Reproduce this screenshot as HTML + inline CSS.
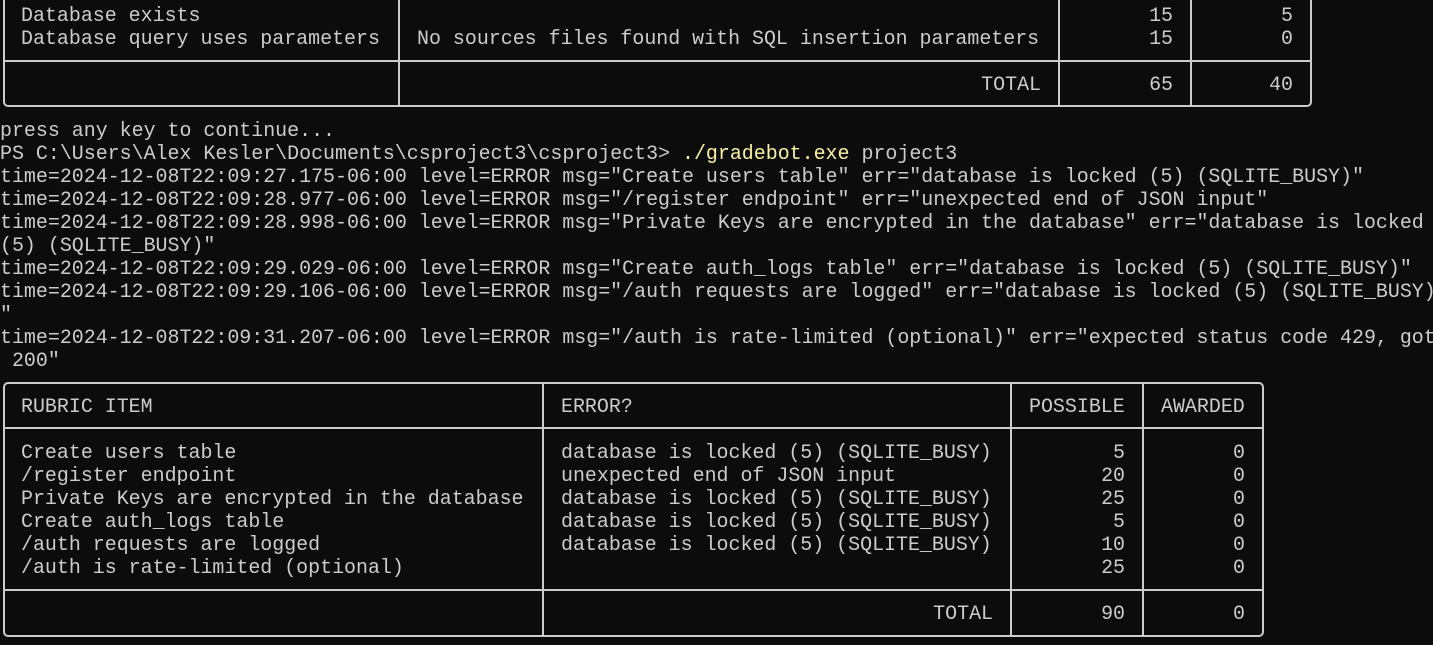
<!DOCTYPE html>
<html><head><meta charset="utf-8"><style>
html,body{margin:0;padding:0;background:#0c0c0c;width:1433px;height:645px;overflow:hidden}
body{position:relative;font-family:"Liberation Mono",monospace;font-size:19.95px;color:#cccccc}
pre{margin:0;font:inherit;line-height:23px;position:absolute;white-space:pre}
.b{position:absolute;border:2px solid #cccccc;box-sizing:border-box}
.v{position:absolute;width:2px;background:#cccccc}
.h{position:absolute;height:2px;background:#cccccc}
.r{text-align:right}
.y{color:#f9f1a5}
</style></head><body>
<div class="b" style="left:3px;top:-10px;width:1309px;height:117px;border-radius:0 0 5px 5px"></div>
<div class="v" style="left:398px;top:0;height:106px"></div>
<div class="v" style="left:1058px;top:0;height:106px"></div>
<div class="v" style="left:1190px;top:0;height:106px"></div>
<div class="h" style="left:3px;top:60px;width:1309px"></div>
<pre style="left:21px;top:3.5px">Database exists
Database query uses parameters</pre>
<pre style="left:417px;top:26.5px">No sources files found with SQL insertion parameters</pre>
<pre class="r" style="left:1100px;width:73px;top:3.5px">15
15</pre>
<pre class="r" style="left:1220px;width:73px;top:3.5px">5
0</pre>
<pre class="r" style="left:900px;width:141px;top:72.5px">TOTAL</pre>
<pre class="r" style="left:1100px;width:73px;top:72.5px">65</pre>
<pre class="r" style="left:1220px;width:73px;top:72.5px">40</pre>

<pre style="left:0;top:119px">press any key to continue...
PS C:\Users\Alex Kesler\Documents\csproject3\csproject3&gt; <span class="y">./gradebot.exe</span> project3
time=2024-12-08T22:09:27.175-06:00 level=ERROR msg="Create users table" err="database is locked (5) (SQLITE_BUSY)"
time=2024-12-08T22:09:28.977-06:00 level=ERROR msg="/register endpoint" err="unexpected end of JSON input"
time=2024-12-08T22:09:28.998-06:00 level=ERROR msg="Private Keys are encrypted in the database" err="database is locked
(5) (SQLITE_BUSY)"
time=2024-12-08T22:09:29.029-06:00 level=ERROR msg="Create auth_logs table" err="database is locked (5) (SQLITE_BUSY)"
time=2024-12-08T22:09:29.106-06:00 level=ERROR msg="/auth requests are logged" err="database is locked (5) (SQLITE_BUSY)
"
time=2024-12-08T22:09:31.207-06:00 level=ERROR msg="/auth is rate-limited (optional)" err="expected status code 429, got
 200"</pre>

<div class="b" style="left:3px;top:382px;width:1261px;height:255px;border-radius:5px"></div>
<div class="v" style="left:542px;top:383px;height:253px"></div>
<div class="v" style="left:1010px;top:383px;height:253px"></div>
<div class="v" style="left:1142px;top:383px;height:253px"></div>
<div class="h" style="left:3px;top:427px;width:1261px"></div>
<div class="h" style="left:3px;top:589px;width:1261px"></div>
<pre style="left:21px;top:395px">RUBRIC ITEM</pre>
<pre style="left:561px;top:395px">ERROR?</pre>
<pre style="left:1029px;top:395px">POSSIBLE</pre>
<pre style="left:1161px;top:395px">AWARDED</pre>
<pre style="left:21px;top:441px">Create users table
/register endpoint
Private Keys are encrypted in the database
Create auth_logs table
/auth requests are logged
/auth is rate-limited (optional)</pre>
<pre style="left:561px;top:441px">database is locked (5) (SQLITE_BUSY)
unexpected end of JSON input
database is locked (5) (SQLITE_BUSY)
database is locked (5) (SQLITE_BUSY)
database is locked (5) (SQLITE_BUSY)</pre>
<pre class="r" style="left:1040px;width:85px;top:441px">5
20
25
5
10
25</pre>
<pre class="r" style="left:1160px;width:85px;top:441px">0
0
0
0
0
0</pre>
<pre class="r" style="left:850px;width:143px;top:602px">TOTAL</pre>
<pre class="r" style="left:1040px;width:85px;top:602px">90</pre>
<pre class="r" style="left:1160px;width:85px;top:602px">0</pre>
</body></html>
